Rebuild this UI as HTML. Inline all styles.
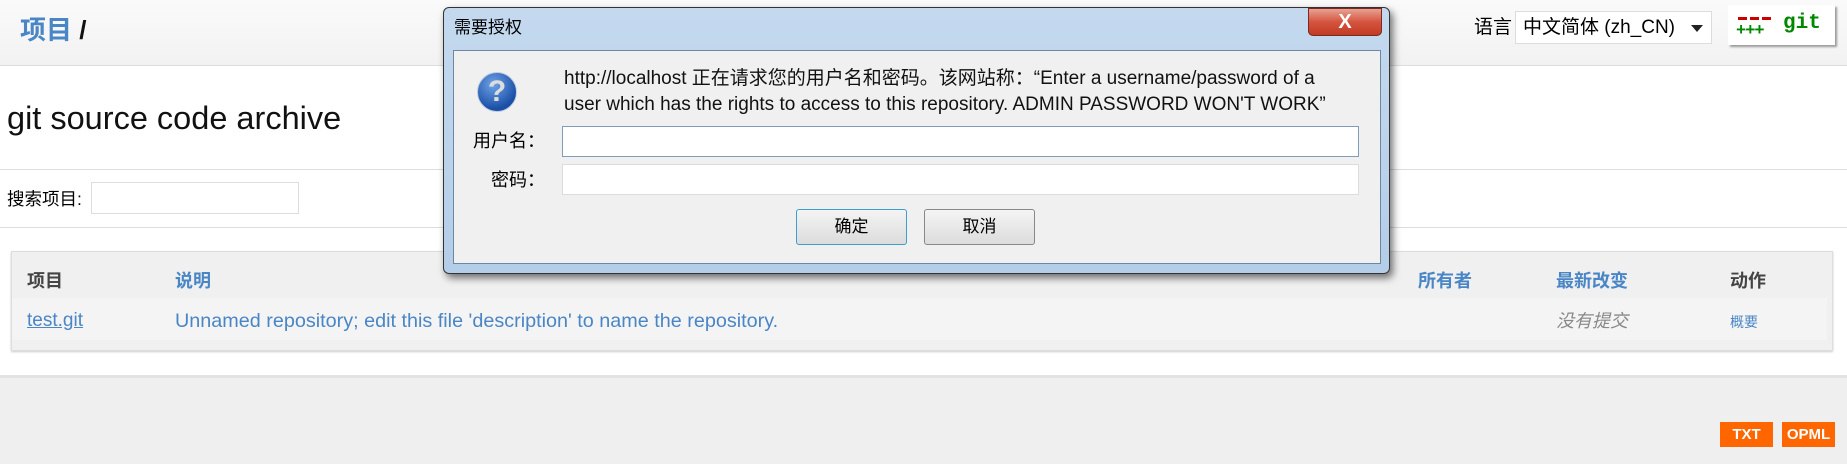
<!DOCTYPE html>
<html><head><meta charset="utf-8"><style>
*{margin:0;padding:0;box-sizing:border-box}
body{width:1847px;height:464px;position:relative;overflow:hidden;background:#fff;font-family:"Liberation Sans","Noto Sans CJK SC",sans-serif;color:#000}
.a{position:absolute}
.hdr{left:0;top:0;width:1847px;height:66px;background:linear-gradient(#fafafa,#f2f2f2);border-bottom:1px solid #ddd}
.blue{color:#4a86c5}
.line{height:1px;background:#ddd;left:0;width:1847px}
</style></head><body>
<div class="a hdr"></div>
<div class="a" style="left:20px;top:10px;font-size:26px;font-weight:bold;line-height:40px"><span class="blue">项目</span> <span style="color:#111">/</span></div>
<div class="a" style="left:1474px;top:14px;font-size:19px;line-height:28px">语言</div>
<div class="a" style="left:1515px;top:11px;width:197px;height:33px;background:#fff;border:1px solid #ddd;font-size:19px;line-height:31px;padding-left:7px">中文简体 (zh_CN)<span style="position:absolute;right:8px;top:13px;width:0;height:0;border-left:6px solid transparent;border-right:6px solid transparent;border-top:7px solid #222"></span></div>
<div class="a" style="left:1728px;top:5px;width:107px;height:40px;background:#fff;box-shadow:2px 2px 2px #999;font-family:'Liberation Mono',monospace;font-weight:bold">
 <div class="a" style="left:10px;top:12px;width:34px;height:3px;background:repeating-linear-gradient(90deg,#c00 0 9px,transparent 9px 12px)"></div>
 <div class="a" style="left:8px;top:19px;color:#080;line-height:16px;font-size:17px;letter-spacing:-1px">+++</div>
 <div class="a" style="left:55px;top:8px;color:#080;line-height:22px;font-size:21px">git</div>
</div>
<div class="a" style="left:7px;top:98px;font-size:32.5px;line-height:40px;color:#111">git source code archive</div>
<div class="a line" style="top:169px"></div>
<div class="a" style="left:7px;top:187px;font-size:17.5px;line-height:24px">搜索项目:</div>
<div class="a" style="left:91px;top:182px;width:208px;height:32px;border:1px solid #ddd;background:#fff"></div>
<div class="a line" style="top:227px"></div>
<div class="a" style="left:11px;top:251px;width:1822px;height:100px;background:#f0f0f0;border:1px solid #ddd;box-shadow:0 1px 2px #ccc"></div>
<div class="a" style="left:12px;top:298px;width:1815px;height:42px;background:#f4f4f4"></div>
<div class="a" style="left:27px;top:268px;font-size:18px;font-weight:bold;color:#444;line-height:26px">项目</div>
<div class="a blue" style="left:175px;top:268px;font-size:18px;font-weight:bold;line-height:26px">说明</div>
<div class="a blue" style="left:1418px;top:268px;font-size:18px;font-weight:bold;line-height:26px">所有者</div>
<div class="a blue" style="left:1556px;top:268px;font-size:18px;font-weight:bold;line-height:26px">最新改变</div>
<div class="a" style="left:1730px;top:268px;font-size:18px;font-weight:bold;color:#444;line-height:26px">动作</div>
<div class="a blue" style="left:27px;top:308px;font-size:19px;line-height:26px;text-decoration:underline">test.git</div>
<div class="a blue" style="left:175px;top:308px;font-size:19.8px;line-height:26px">Unnamed repository; edit this file 'description' to name the repository.</div>
<div class="a" style="left:1556px;top:308px;font-size:18px;line-height:26px;color:#888;font-style:italic">没有提交</div>
<div class="a blue" style="left:1730px;top:310px;font-size:14px;line-height:24px">概要</div>
<div class="a" style="left:0;top:375px;width:1847px;height:89px;background:#efefef;border-top:3px solid #e2e2e2"></div>
<div class="a" style="left:1720px;top:422px;width:53px;height:25px;background:#f60;color:#fff;font-weight:bold;font-size:15px;text-align:center;line-height:25px">TXT</div>
<div class="a" style="left:1782px;top:422px;width:53px;height:25px;background:#f60;color:#fff;font-weight:bold;font-size:15px;text-align:center;line-height:25px">OPML</div>

<div class="a" style="left:443px;top:7px;width:947px;height:267px;background:linear-gradient(#c4d9ee,#b4cde8);border:1px solid #333;border-radius:6px;box-shadow:3px 4px 8px rgba(0,0,0,.55)"></div>
<div class="a" style="left:454px;top:16px;font-size:17px;line-height:24px">需要授权</div>
<div class="a" style="left:1308px;top:8px;width:74px;height:28px;background:linear-gradient(#e9a293,#d4543e 50%,#c23a24);border:1px solid #7a2a20;border-radius:0 0 5px 5px;color:#fff;font-weight:bold;font-size:20px;text-align:center;line-height:26px">X</div>
<div class="a" style="left:453px;top:50px;width:928px;height:214px;background:#f0f0f0;border:1px solid #6f86a0"></div>
<div class="a" style="left:477px;top:72px;width:40px;height:40px;border-radius:50%;background:radial-gradient(circle at 40% 30%,#6ea2e6,#1b4fa6 70%);border:1px solid #bcd;color:#ddd;font-weight:bold;font-size:30px;text-align:center;line-height:38px">?</div>
<div class="a" style="left:564px;top:66px;font-size:19px;line-height:26px;color:#111;white-space:nowrap">http://localhost 正在请求您的用户名和密码。该网站称：“Enter a username/password of a<br>user which has the rights to access to this repository. ADMIN PASSWORD WON'T WORK”</div>
<div class="a" style="left:460px;top:128px;width:85px;text-align:right;font-size:18px;line-height:26px">用户名：</div>
<div class="a" style="left:460px;top:167px;width:85px;text-align:right;font-size:18px;line-height:26px">密码：</div>
<div class="a" style="left:562px;top:126px;width:797px;height:31px;background:#fff;border:1px solid #7f9db9"></div>
<div class="a" style="left:562px;top:164px;width:797px;height:31px;background:#fff;border:1px solid #dcdcdc"></div>
<div class="a" style="left:796px;top:209px;width:111px;height:36px;background:linear-gradient(#f4f4f4,#dcdcdc);border:1px solid #3c9fd0;border-radius:3px;font-size:17px;text-align:center;line-height:34px">确定</div>
<div class="a" style="left:924px;top:209px;width:111px;height:36px;background:linear-gradient(#f4f4f4,#dcdcdc);border:1px solid #888;border-radius:3px;font-size:17px;text-align:center;line-height:34px">取消</div>
</body></html>
